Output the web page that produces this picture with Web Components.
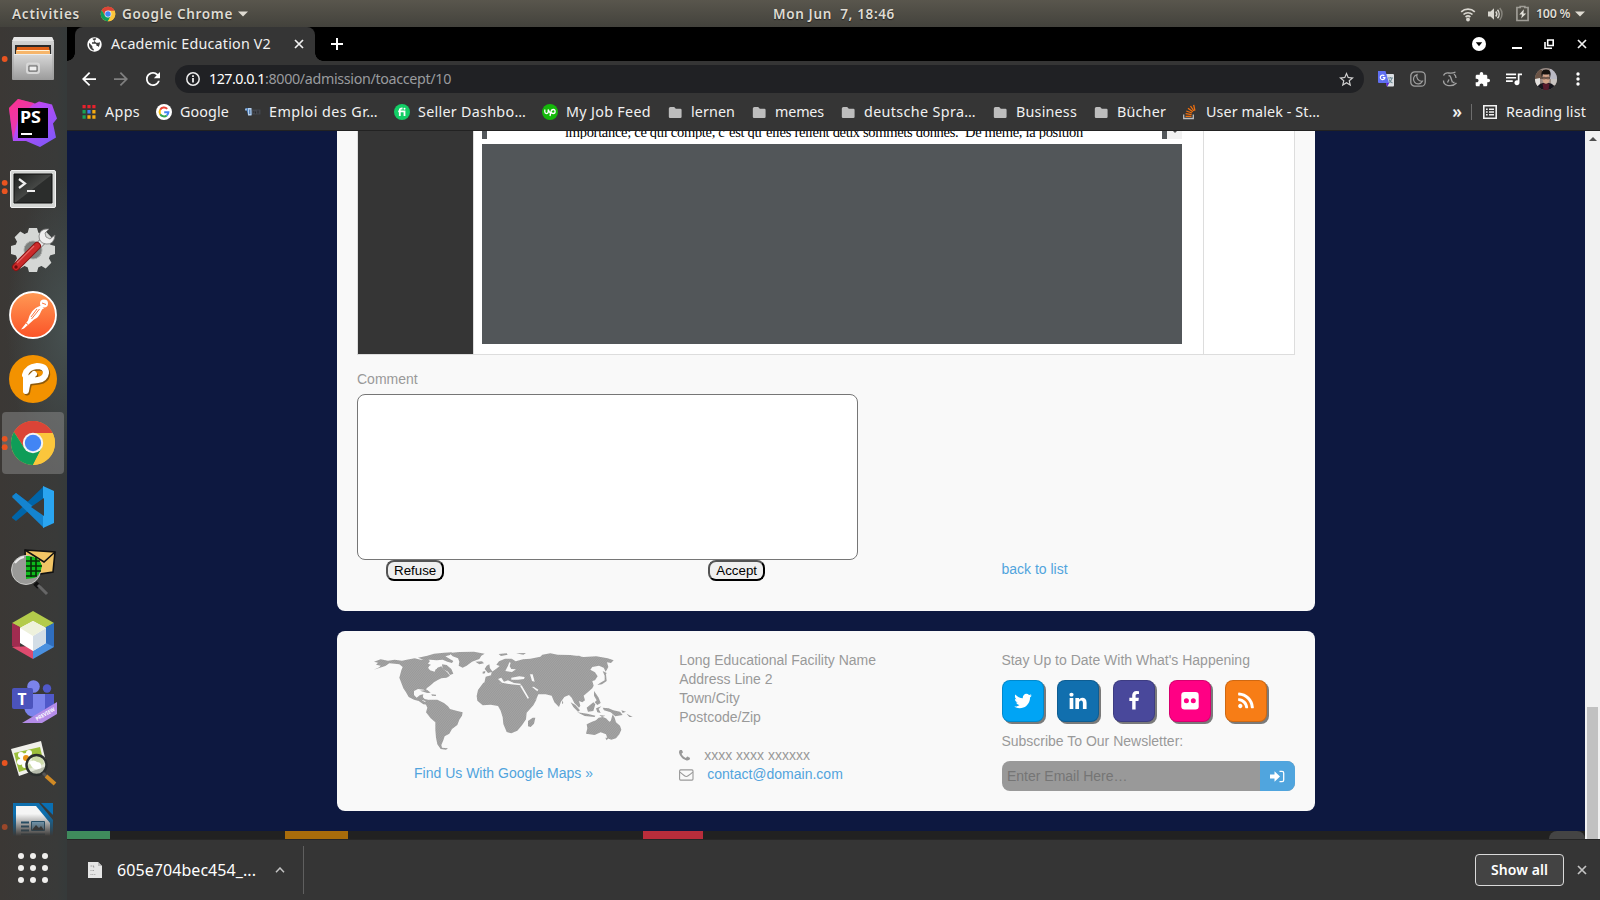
<!DOCTYPE html>
<html lang="en">
<head>
<meta charset="utf-8">
<title>Academic Education V2</title>
<style>
html,body{margin:0;height:100%;overflow:hidden;background:#0d1840}
body{font-family:"Noto Sans","Open Sans",sans-serif}
</style>
</head>
<body>
<desk-top></desk-top>
<script>
const def=(tag,css,html,init)=>customElements.define(tag,class extends HTMLElement{
  constructor(){super();this.attachShadow({mode:'open'})}
  connectedCallback(){
    if(this.ready)return;this.ready=true;
    this.shadowRoot.innerHTML=`<style>*{box-sizing:border-box}${css}</style>${typeof html==='function'?html(this):html}`;
    if(init)init(this);
  }
});

/* Text run whose letter spacing adapts to a given width */
def('fit-text',':host{display:inline-block;justify-self:start;white-space:pre;line-height:20px}','<slot></slot>',el=>{
  const w=parseFloat(el.getAttribute('w'));
  if(w){
    const n=el.textContent.length,cur=el.getBoundingClientRect().width;
    el.style.letterSpacing=((w-cur)/n).toFixed(3)+'px';
    el.style.width=w+'px';
  }
});

const chromeLogo=`<circle cx="24" cy="24" r="22" fill="#fbc63c"/><path d="M24 24L4.950 13A22 22 0 0 1 43.050 13z" fill="#db4437"/><path d="M24 14H43.600A22 22 0 0 0 4.950 13L15.300 29z" fill="#db4437"/><path d="M4.950 13A22 22 0 0 0 24 46L32.700 29 24 34 15.300 29z" fill="#0f9d58"/><path d="M43.600 14A22 22 0 0 1 24 46L32.700 29 24 14z" fill="#fbc63c"/><circle cx="24" cy="24" r="10.200" fill="#f4f4f4"/><circle cx="24" cy="24" r="8.200" fill="#4285f4"/>`;
const folder='<path d="M1 4q0-2 2-2h4.500l2 2.300H15q1.500 0 1.500 1.500V14q0 1.500-1.500 1.500H2.500Q1 15.500 1 14z" fill="#bdbdbd"/>';
const ICONS={
 chrome:['0 0 48 48',chromeLogo],
 down:['0 0 10 6','<path d="M0 .5h10L5 5.500z" fill="currentColor"/>'],
 wifi:['0 0 16 16','<g fill="none" stroke="#d9d7d0" stroke-width="1.700"><path d="M1.200 5.800a10 10 0 0 1 13.600 0M3.500 8.500a6.600 6.600 0 0 1 9 0M5.600 11a3.600 3.600 0 0 1 4.800 0"/></g><circle cx="8" cy="13.500" r="1.900" fill="#d9d7d0"/>'],
 vol:['0 0 16 16','<path d="M1 5.500h2.500L7 2.300v11.400L3.500 10.500H1z" fill="#d9d7d0"/><g fill="none" stroke="#d9d7d0" stroke-width="1.500"><path d="M8.800 5.500a4 4 0 0 1 0 5M10.500 3.700a6.500 6.500 0 0 1 0 8.600"/><path d="M12.700 2a9 9 0 0 1 0 12" opacity=".4"/></g>'],
 bat:['0 0 14 18','<path d="M4.500 2.500V1.500h5v1H13v14H1v-14z" fill="none" stroke="#a09e97" stroke-width="1.800"/><path d="M8.500 4.500L3.500 10h3l-1 4.500L11 9H8z" fill="#e1dfd8"/>'],
 globe:['1.500 1.500 21 21','<path fill="#fff" d="M12 2C6.480 2 2 6.480 2 12s4.480 10 10 10 10-4.480 10-10S17.520 2 12 2z"/><path fill="#353535" d="M4.500 9.500L9 14.500v1.500q0 2 2 2.300v2C6 19.500 3.500 15 4.500 9.500zM9 4q2-1 5-.6v1q0 2-2.500 2.200l-.5 2.400H8.500v2h5q1.500.3 1.500 3h1.500q1 .5 1.500 1.500 2-3.500 1.500-6.500-1-.5-2 .5l-3 .2L12 7.500z" opacity=".95"/>'],
 x:['0 0 10 10','<path d="M1 1l8 8M9 1L1 9" stroke="currentColor" stroke-width="1.700" fill="none"/>'],
 plus:['0 0 12 12','<path d="M6 0v12M0 6h12" stroke="#fff" stroke-width="2"/>'],
 tri:['0 0 14 14','<circle cx="7" cy="7" r="7" fill="#fff"/><path d="M3.800 5.200h6.400L7 9.200z" fill="#000"/>'],
 min:['0 0 10 10','<path d="M0 9h10" stroke="#fff" stroke-width="2"/>'],
 restore:['0 0 10 10','<path d="M3.700 1h5.500v5.500H3.700z M1 3v6.200h7" stroke="#fff" stroke-width="1.600" fill="none"/>'],
 back:['4 4 16 16','<path fill="currentColor" d="M20 11H7.830l5.590-5.590L12 4l-8 8 8 8 1.410-1.410L7.830 13H20v-2z"/>'],
 fwd:['4 4 16 16','<path fill="currentColor" d="M4 11h12.170l-5.590-5.590L12 4l8 8-8 8-1.410-1.410L16.170 13H4v-2z"/>'],
 reload:['4 4 16 16','<path fill="#fff" d="M17.650 6.350C16.200 4.900 14.210 4 12 4c-4.420 0-7.990 3.580-7.990 8s3.570 8 7.990 8c3.730 0 6.840-2.550 7.730-6h-2.080c-.82 2.330-3.040 4-5.650 4-3.310 0-6-2.690-6-6s2.690-6 6-6c1.660 0 3.140.69 4.220 1.780L13 11h7V4l-2.350 2.350z"/>'],
 info:['0 0 14 14','<circle cx="7" cy="7" r="6.200" fill="none" stroke="#ececec" stroke-width="1.500"/><path d="M7 3.200v1.700M7 6v4.600" stroke="#ececec" stroke-width="1.800"/>'],
 star:['2 2 20 20','<path fill="#d0d0d0" d="M22 9.240l-7.190-.62L12 2 9.190 8.630 2 9.240l5.460 4.730L5.820 21 12 17.270 18.180 21l-1.630-7.030L22 9.240zM12 15.400l-3.760 2.270 1-4.280-3.320-2.880 4.380-.38L12 6.100l1.710 4.040 4.380.38-3.320 2.880 1 4.280L12 15.400z"/>'],
 trans:['0 0 16 16','<path d="M6 3h9q1 0 1 1v10.500q0 1-1 1H9z" fill="#dcdfe3"/><path d="M10 7h5M12.500 6v1M14 7q-.7 3.500-3.500 5M11 8.500q1 2.500 3.500 3.500" stroke="#6d8a95" stroke-width="1.100" fill="none"/><path d="M0 0h7.500l3.500 12H1q-1 0-1-1z" fill="#5f6ff2"/><path d="M8 12h3.200L9 16z" fill="#5a22d8"/><path d="M6.300 4.800A2.300 2.300 0 1 0 6.900 6.600H4.800" fill="none" stroke="#fff" stroke-width="1.200"/>'],
 moon:['0 0 16 16','<rect x=".8" y=".8" width="14.400" height="14.400" rx="4" fill="none" stroke="#9e9e9e" stroke-width="1.300"/><path d="M7 3.600a4.700 4.700 0 1 0 5.400 6.600A5 5 0 0 1 7 3.600z" fill="none" stroke="#9e9e9e" stroke-width="1.200"/>'],
 aa:['0 0 16 16','<g fill="none" stroke="#a3a3a3" stroke-width="1.300"><path d="M1.500 4.500Q3 1.500 6.500 2q4 .6 7-1M12 3q2 1.500 2 4M1.500 9.500q0 4 4 4.800 6 1 9-2.300"/><path d="M5.500 11.500L7 8.500M6.500 5q1.500-.8 2 .8l2 5.700M11 11.500h1.500"/></g>'],
 puzzle:['1 1 22 22','<path fill="#fff" d="M20.500 11H19V7c0-1.100-.9-2-2-2h-4V3.500C13 2.120 11.880 1 10.500 1S8 2.120 8 3.500V5H4c-1.100 0-1.990.9-1.990 2v3.800H3.500c1.490 0 2.700 1.210 2.700 2.700s-1.210 2.700-2.700 2.700H2V20c0 1.100.9 2 2 2h3.800v-1.500c0-1.490 1.210-2.700 2.700-2.700s2.700 1.210 2.700 2.700V22H17c1.100 0 2-.9 2-2v-4h1.500c1.380 0 2.500-1.120 2.500-2.500S21.880 11 20.500 11z"/>'],
 music:['3 3 19 19','<path fill="#fff" d="M15 6H3v2h12V6zm0 4H3v2h12v-2zM3 16h8v-2H3v2zM17 6v8.180c-.31-.11-.65-.18-1-.18-1.660 0-3 1.340-3 3s1.340 3 3 3 3-1.340 3-3V8h3V6h-5z"/>'],
 avatar:['0 0 22 22','<clipPath id="c"><circle cx="11" cy="11" r="11"/></clipPath><g clip-path="url(#c)"><path d="M0 0h22v22H0z" fill="#9a8c86"/><path d="M0 2h7v9H0z" fill="#6b5446"/><path d="M15 1h7v10h-7z" fill="#b9b9c4"/><path d="M0 11l5-1v8H0z" fill="#e4e1de"/><path d="M16 11h6v6h-6z" fill="#c8c3c0"/><path d="M2 22q0-6 6-7h6q6 1 6 7z" fill="#15151c"/><path d="M7.500 15.500h7l-1 6.500h-5z" fill="#571a2c"/><ellipse cx="11" cy="10.500" rx="3.600" ry="5.300" fill="#d5a58a"/><path d="M7 10Q4.500 1.500 11 1.500T15 10l-.7-4q-3.500 1-6.500 0z" fill="#17120f"/><path d="M7.600 9.300h2.800v1.500H7.600zM11.600 9.300h2.800v1.500h-2.800z" fill="none" stroke="#26201e" stroke-width=".7"/></g>'],
 more:['0 0 4 14','<g fill="#fff"><circle cx="2" cy="2" r="1.700"/><circle cx="2" cy="7" r="1.700"/><circle cx="2" cy="12" r="1.700"/></g>'],
 apps:['0 0 14 14','<path d="M.5 0h3.200v3.200H.5zM5.400 0h3.200v3.200H5.400zM10.300 0h3.200v3.200h-3.200z" fill="#e8212c"/><path d="M.5 5h3.200v3.500H.5zM.5 10.300h3.200v3.400H.5z" fill="#17a357"/><path d="M5.400 5h3.200v3.500H5.400z" fill="#3e7cf0"/><path d="M5.400 10.300h3.200v3.400H5.400zM10.300 5h3.200v3.500h-3.200zM10.300 10.300h3.200v3.400h-3.200z" fill="#f6ab12"/>'],
 google:['0 0 16 16','<circle cx="8" cy="8" r="8" fill="#fff"/><g fill="none" stroke-width="2"><path d="M11.200 4.900A4.400 4.400 0 0 0 4.200 5.800" stroke="#ea4335"/><path d="M4.200 5.800a4.400 4.400 0 0 0 0 4.400" stroke="#fbbc05"/><path d="M4.200 10.200a4.400 4.400 0 0 0 6.600 1.200" stroke="#34a853"/><path d="M10.800 11.400A4.200 4.200 0 0 0 12.400 8.200H8.200" stroke="#4285f4"/></g>'],
 isat:['0 0 16 16','<path d="M1 4h5l.7 7H3z" fill="#4f83c2"/><path d="M3 4h3.500v7.500H3z" fill="#b5cfea"/><path d="M4.300 5.500h1v4.500h-1z" fill="#2f5f9e"/><path d="M0 4.500h2v2H0z" fill="#8fb4dc"/><path d="M7 5.500h8.500v5H7z" fill="#43464d"/><path d="M8 8h1.500M10.500 7.500v2M13 6.500v3" stroke="#262629"/>'],
 fi:['0 0 16 16','<circle cx="8" cy="8" r="8" fill="#13ce66"/><path d="M5.800 12V5.800q0-1.500 2.700-1.300M4.200 7.400h6.300V12" fill="none" stroke="#fff" stroke-width="1.800"/><circle cx="10.500" cy="4.700" r="1" fill="#fff"/>'],
 up:['0 0 16 16','<circle cx="8" cy="8" r="8" fill="#14b80a"/><path d="M2.800 5.500v2.300q0 1.800 1.700 1.800t1.700-1.800V5.500Q7.500 8.500 8.500 9.500M8 12l1-4.500q.5-2 2.300-2t1.800 2-1.800 2T9 8" fill="none" stroke="#fff" stroke-width="1.300"/>'],
 folder:['0 1 17 15.500',folder],
 stack:['0 0 16 16','<path d="M1.700 10.500v4h9.600v-4" fill="none" stroke="#bdbdbd" stroke-width="1.300"/><g stroke="#f2700d" stroke-width="1.300"><path d="M3.500 12.300h6M3.600 9.700l6 .9M4.300 7l5.700 2M6 4.200l4.800 3.600M8.500 2l3.400 5M11.700.8l1.200 5.900"/></g>'],
 list:['0 0 14 14','<path d="M.8.800h12.400v12.400H.8z" fill="none" stroke="#f1f1f1" stroke-width="1.600"/><path d="M3 4.300h1.700M3 7h1.700M3 9.700h1.700M6 4.300h5M6 7h5M6 9.700h5" stroke="#f1f1f1" stroke-width="1.500"/>'],
 file:['0 0 14 16','<path d="M0 0h10l4 4v12H0z" fill="#e6e6e6"/><path d="M10 0l4 4h-4z" fill="#bcbcbc"/><g stroke="#a2a2a2" stroke-width="1.200"><path d="M2.500 4h1.500M2.500 8.500h1M4.500 8.500h1.500M2.500 12.500h1M4.300 12.500h1M6.300 12.500h1M5 3.500l1 2" /></g>'],
 caret:['0 0 10 6','<path d="M1 5.200L5 1l4 4.200" fill="none" stroke="#c4c4c4" stroke-width="1.500"/>'],
 twitter:['0 0 1792 1792','<path fill="#fff" d="M1684 408q-67 98-162 167 1 14 1 42 0 130-38 259.500t-115.500 248.500-184.500 210.500-258 146-323 54.500q-271 0-496-145 35 4 78 4 225 0 401-138-105-2-188-64.500t-114-159.500q33 5 61 5 43 0 85-11-112-23-185.500-111.500t-73.500-205.500v-4q68 38 146 41-66-44-105-115t-39-154q0-88 44-163 121 149 294.500 238.500t371.500 99.500q-8-38-8-74 0-134 94.500-228.500t228.500-94.500q140 0 236 102 109-21 205-78-37 115-142 178 93-10 186-50z"/>'],
 linkedin:['0 0 1792 1792','<path fill="#fff" d="M477 625v991h-330v-991h330zm21-306q1 73-50.500 122t-135.500 49h-2q-82 0-132-49t-50-122q0-74 51.500-122.500t134.500-48.500 133 48.500 51 122.500zm1166 729v568h-329v-530q0-105-40.500-164.500t-126.500-59.500q-63 0-105.500 34.500t-63.500 85.500q-11 30-11 81v553h-329q2-399 2-647t-1-296l-1-48h329v144h-2q20-32 41-56t56.500-52 87-43.500 114.500-15.500q171 0 275 113.500t104 332.500z"/>'],
 facebook:['0 0 1792 1792','<path fill="#fff" d="M1343 12v264h-157q-86 0-116 36t-30 108v189h293l-39 296h-254v759h-306v-759h-255v-296h255v-218q0-186 104-288.500t277-102.500q147 0 228 12z"/>'],
 flickr:['0 0 20 20','<rect x="1.300" y="1" width="17.400" height="17.400" rx="3.200" fill="#fff"/><circle cx="6.400" cy="9.700" r="2.500" fill="#ff0084"/><circle cx="13.300" cy="9.700" r="2.500" fill="#ff0084"/>'],
 rss:['0 0 1792 1792','<path fill="#fff" d="M576 1344q0 80-56 136t-136 56-136-56-56-136 56-136 136-56 136 56 56 136zm512 123q2 28-17 48-18 21-47 21h-135q-25 0-43-16.500t-20-41.500q-22-229-184.500-391.500t-391.500-184.500q-25-2-41.500-20t-16.500-43v-135q0-29 21-47 17-17 43-17h5q160 13 306 80.500t259 181.500q114 113 181.500 259t80.500 306zm512 2q2 27-18 47-18 20-46 20h-143q-26 0-44.500-17.500t-19.500-42.500q-12-215-101-408.500t-231.500-336-336-231.500-408.500-102q-25-1-42.500-19.500t-17.500-43.500v-143q0-28 20-46 18-18 44-18h3q262 13 501.500 120t425.500 294q187 186 294 425.500t120 501.500z"/>'],
 phone:['192 256 1408 1280','<path fill="#999" d="M1600 1240q0 27-10 70.500t-21 68.500q-21 50-122 106-94 51-186 51-27 0-53-3.500t-57.500-12.500-47-14.500-55.500-20.500-49-18q-98-35-175-83-127-79-264-216t-216-264q-48-77-83-175-3-9-18-49t-20.500-55.500-14.500-47-12.500-57.500-3.500-53q0-92 51-186 56-101 106-122 25-11 68.500-21t70.500-10q14 0 21 3 18 6 53 76 11 19 30 54t35 63.500 31 53.500q3 4 17.500 25t21.500 35.500 7 28.500q0 20-28.500 50t-62 55-62 53-28.500 46q0 9 5 22.500t8.500 20.500 14 24 11.500 19q76 137 174 235t235 174q2 1 19 11.500t24 14 20.500 8.500 22.500 5q18 0 46-28.500t53-62 55-62 50-28.500q14 0 28.500 7t35.500 21.500 25 17.500q25 15 53.500 31t63.500 35 54 30q70 35 76 53 3 7 3 21z"/>'],
 mail:['0 0 15 12','<rect x=".6" y=".9" width="13.400" height="10.200" rx="1" fill="none" stroke="#999" stroke-width="1.100"/><path d="M1 3.200Q3 5 5.500 6.800q1.800 1.400 3.600 0Q12 5 13.800 3.200" fill="none" stroke="#999" stroke-width="1.100"/>'],
 signin:['0 0 15 13','<path d="M0 4.500h4.500V1.300L10 6.500 4.500 11.700V8.500H0z" fill="#fff"/><path d="M9.500 1.400h2.600q1.600 0 1.600 1.600v7q0 1.600-1.600 1.600H9.500" fill="none" stroke="#fff" stroke-width="1.300"/>']
};
def('ui-icon',':host{display:inline-flex;flex:none}svg{display:block}',el=>{
  const [vb,body]=ICONS[el.getAttribute('name')];
  const s=el.getAttribute('size').split('x');
  return `<svg width="${s[0]}" height="${s[1]||s[0]}" viewBox="${vb}">${body}</svg>`;
});

/* ---------- GNOME top bar ---------- */
def('top-bar',`:host{display:grid;grid-template-columns:773px 122px 1fr;align-items:center;height:27px;background:linear-gradient(#59564d,#43423c);color:#dfdbd2;font-weight:600;font-size:13.500px;text-shadow:0 1px 1px #222}
 .l,.r{display:flex;align-items:center}.l{padding-left:12px}.r{justify-content:flex-end;padding-right:15px}`,
`<div class="l"><fit-text w="68">Activities</fit-text><ui-icon name="chrome" size="16" style="margin:0 6px 0 20px"></ui-icon><fit-text w="111">Google Chrome</fit-text><ui-icon name="down" size="10x6" style="margin-left:5px"></ui-icon></div>
<fit-text w="122">Mon Jun  7, 18:46</fit-text>
<div class="r"><ui-icon name="wifi" size="16"></ui-icon><ui-icon name="vol" size="16" style="margin:0 13px 0 11px"></ui-icon><ui-icon name="bat" size="13x17"></ui-icon><fit-text w="34" style="margin:0 5px 0 7px;font-size:12.500px">100 %</fit-text><ui-icon name="down" size="10x6" ></ui-icon></div>`);

/* ---------- Dock ---------- */
const DOCK={
files:`<defs><linearGradient id="g" x2="0" y2="1"><stop stop-color="#d8d8d8"/><stop offset="1" stop-color="#9b9b9b"/></linearGradient></defs><path d="M14 10h38l2 5v37q0 1-1 1H13q-1 0-1-1V15z" fill="url(#g)"/><path d="M14 10h38l2 4H12z" fill="#e6e6e6"/><path d="M15 18h36v9H15z" fill="#2b2b2b"/><path d="M17 20h32l1 7H16z" fill="#de5f17"/><path d="M16 23h34v4H16z" fill="#f6b56a"/><path d="M17 23.500h32" stroke="#fff3da"/><path d="M14 27h38v26H14z" fill="url(#g)"/><path d="M14 27.500h38" stroke="#ececec"/><rect x="27" y="36.500" width="12" height="9.500" rx="2" fill="none" stroke="#d8d8d8" stroke-width="2"/><path d="M29 39h8v5h-8z" fill="#eee" stroke="#666"/>`,
ps:`<defs><linearGradient id="g" x2="1" y2="1"><stop stop-color="#ff318c"/><stop offset=".4" stop-color="#b74af7"/><stop offset="1" stop-color="#765af8"/></linearGradient></defs><path d="M18 8l17 4.500 4-2 13 3 5 14-4 5 3 14-16 9.500-14-6H13L9 17z" fill="url(#g)"/><path d="M18 8l16 4-16 16-5 20L9 17z" fill="#ff318c" opacity=".65"/><path d="M18 17h30v30H18z" fill="#000"/><text x="20" y="31.500" font-family="Noto Sans,sans-serif" font-weight="700" font-size="15.500" fill="#fff" textLength="21" lengthAdjust="spacingAndGlyphs">PS</text><path d="M21 42h11v2H21z" fill="#fff"/>`,
term:`<defs><linearGradient id="g" x2="1" y2="1"><stop stop-color="#1d1f1e"/><stop offset=".5" stop-color="#454745"/><stop offset=".52" stop-color="#2b2d2c"/><stop offset="1" stop-color="#2b2d2c"/></linearGradient></defs><rect x="10.500" y="15.500" width="45" height="37" rx="1.500" fill="#d4d6d4" stroke="#f2f2f2"/><path d="M14 19h38v29H14z" fill="url(#g)" stroke="#111"/><path d="M19 24l6 4.500-6 4.500" fill="none" stroke="#eee" stroke-width="2.200"/><path d="M27 36h8" stroke="#eee" stroke-width="2"/>`,
tools:`<g transform="translate(33 31)"><g fill="#d5d7d5"><path d="M-4-22h8l2 7h-12zM-4 22h8l2-7h-12z"/><path d="M-22-4v8l7 2v-12zM22-4v8l-7 2v-12z"/><g transform="rotate(45)"><path d="M-4-22h8l2 7h-12zM-4 22h8l2-7h-12z"/><path d="M-22-4v8l7 2v-12zM22-4v8l-7 2v-12z"/></g></g><circle r="13.500" fill="none" stroke="#d5d7d5" stroke-width="9"/><circle r="9" fill="#7c7e7c" stroke="#aeb0ae" stroke-width="1"/></g><path d="M35 30l9-9" stroke="#777" stroke-width="7"/><path d="M35 30l9-9" stroke="#e6e6e6" stroke-width="5.500"/><path d="M49 10q-9-1-10 7 0 7 7 8 8 1 9-9l-5 4-4-2-1-4z" fill="#eee" stroke="#777" stroke-width=".8"/><path d="M16 48L37 27" stroke="#8b1414" stroke-width="8" stroke-linecap="round"/><path d="M16 48L37 27" stroke="#cc2a2a" stroke-width="6" stroke-linecap="round"/><path d="M17 44L34 27" stroke="#e46a6a" stroke-width="1.200"/><circle cx="16" cy="48" r="1.700" fill="#6b0d0d"/>`,
postman:`<defs><linearGradient id="g" x2="0" y2="1"><stop stop-color="#ff9a55"/><stop offset="1" stop-color="#fb5327"/></linearGradient></defs><circle cx="33" cy="32" r="23" fill="url(#g)" stroke="#fff" stroke-width="1.800"/><circle cx="44" cy="20.500" r="4" fill="#fff"/><path d="M41 22.500q-6 2-9 6-3 4-4 9l-7 9 3-1 10-9q5-2 7-8 1-3 3-3z" fill="#fff"/><path d="M39.500 26l-8 10M37 26l-6 8M42 20l4 1.500M26 40l2 1.500" stroke="#fb7640" stroke-width="1"/>`,
pp:`<circle cx="33" cy="32" r="24" fill="#f39200"/><g fill="none" stroke-width="6" stroke-linecap="round" stroke-linejoin="round"><path d="M26 44q1-8 4-13l4-4M25 28q2-8 12-9 9 0 9 7-1 6-8 7l-8 1" stroke="#8f5a0a" transform="translate(1.200 1.500)"/><path d="M26 44q1-8 4-13l4-4M25 28q2-8 12-9 9 0 9 7-1 6-8 7l-8 1" stroke="#fff"/><path d="M26 42V30" stroke="#fff"/></g>`,
chrome:`<rect x="2" y="1" width="62" height="62" rx="4" fill="#8b8b8b" opacity=".5"/><g transform="translate(9 8)">${chromeLogo}</g>`,
code:`<path d="M12 21l4-3 28 21v8z" fill="#0a7ac8"/><path d="M12 42L44 11v12L16 46l-4-3z" fill="#0065a9"/><path d="M12 22l4-4 28 22v13z" fill="#1484d0"/><path d="M43 11l11 5v32l-11 5z" fill="#2aa5f1"/><path d="M44 23v18L31 32z" fill="#3b3b39"/>`,
spy:`<path d="M25 11l30 2-2 20-27 4z" fill="#f2c565" stroke="#111" stroke-width="1.600"/><path d="M25 11l19 12L55 13" fill="none" stroke="#111" stroke-width="1.600"/><circle cx="26" cy="31" r="14.500" fill="#9a9a98" stroke="#c9c9c7" stroke-width="1"/><path d="M26 17q13-1 16 10-2 10-8 12l-8 1z" fill="#0dbb1b"/><path d="M26 22h14M26 27h16M26 32h15M26 37h11M31 18v20M36 18v19" stroke="#072d09" stroke-width="1.600"/><path d="M15 24q4-5 9-6" stroke="#eee" stroke-width="2" fill="none"/><path d="M35 44l4 4" stroke="#111" stroke-width="5"/><path d="M38 46l9 9" stroke="#666" stroke-width="3"/>`,
nb:`<path d="M33 8l21 12-21 12-21-12z" fill="#b3cb4b"/><path d="M12 20v23l8 4V24z" fill="#a02c50"/><path d="M12 44l21 12V43z" fill="#dd4a6e"/><path d="M54 20v24L33 56V43z" fill="#4a90df"/><path d="M54 20v24l-10-5V25z" fill="#2f6ebf"/><path d="M33 18l13 7v15l-13 8-13-8V25z" fill="#fff"/><path d="M33 33l13-8v15l-13 8z" fill="#d3dde6"/><path d="M33 18l13 7-13 8-13-8z" fill="#eef1dc"/>`,
teams:`<circle cx="33.500" cy="19.500" r="6.300" fill="#7b83eb"/><circle cx="47" cy="21.500" r="4.200" fill="#5059c9"/><path d="M41 27h13v12q0 6-6 8l-7-3z" fill="#5059c9"/><path d="M24 27h21v14q-1 9-10 9t-11-9z" fill="#7b83eb"/><rect x="12" y="21" width="21" height="21" rx="2" fill="#4b53bc"/><text x="17.500" y="37.500" font-family="Noto Sans,sans-serif" font-weight="700" font-size="15.500" fill="#fff">T</text><path d="M22 56L57 35v12L42 56z" fill="#b48ce8"/><text transform="translate(37 54) rotate(-30)" font-family="Noto Sans,sans-serif" font-weight="700" font-size="5.300" fill="#fff" textLength="21" lengthAdjust="spacingAndGlyphs">PREVIEW</text>`,
viewer:`<path d="M11 18l30-8 6 25-28 10z" fill="#f0f0ea"/><path d="M14 22l26-6 4 17-25 8z" fill="#9cbf3b"/><g fill="#fff"><circle cx="26" cy="28" r="6"/><circle cx="21" cy="24" r="3"/><circle cx="29" cy="22" r="3"/><circle cx="20" cy="31" r="3"/><circle cx="25" cy="34" r="3"/></g><circle cx="26" cy="27" r="3" fill="#e99316"/><circle cx="36.500" cy="34" r="10" fill="#dfe5d2" opacity=".75"/><path d="M29 31q5-3 8 0 5 0 4 6-6 3-9-1z" fill="#fff"/><circle cx="36.500" cy="34" r="10" fill="none" stroke="#2b2f2e" stroke-width="2.500"/><path d="M43 42l4 4" stroke="#555" stroke-width="3"/><path d="M46 45l9 8" stroke="#d08a25" stroke-width="4"/>`,
impress:`<defs><linearGradient id="g" x2="0" y2="1"><stop offset=".35" stop-color="#3a3937" stop-opacity="0"/><stop offset="1" stop-color="#3a3937"/></linearGradient></defs><path d="M13 8h26l14 17v28H13z" fill="#0e6fae"/><path d="M41 8h12v12z" fill="#0a6fb3"/><path d="M16 11h20l14 17v25H16z" fill="#f5f5f5"/><path d="M21 27.500h8M21 31.500h8M21 35.500h8M21 39.500h24" stroke="#1c5a80" stroke-width="1.800"/><path d="M31.500 26.500h13v9h-13z" fill="#8fc4e6" stroke="#1c5a80"/><path d="M32 35l4-5 3 3 2-2 3 4z" fill="#333"/><rect x="12" y="7" width="43" height="34" fill="url(#g)"/>`
};
def('dock-item',':host{display:block;height:64px;width:67px;flex:none}svg{display:block}',el=>{
  const n=+el.getAttribute('dots')||0,faded=el.hasAttribute('faded');
  const d=n===1?'<circle cx="4.700" cy="32" r="2.900"/>':n===2?'<circle cx="4.700" cy="27.800" r="2.900"/><circle cx="4.700" cy="36.200" r="2.900"/>':'';
  return `<svg width="67" height="64" viewBox="0 0 67 64">${DOCK[el.getAttribute('app')]}<g fill="#e95420" opacity="${faded?.55:1}">${d}</g></svg>`;
});
def('side-dock',`:host{display:flex;flex-direction:column;width:67px;background:radial-gradient(ellipse 60px 150px at 67px 300px,#465050 0,transparent 100%),linear-gradient(90deg,#3b3835,#393a39 85%,#353a3a);overflow:hidden}
 .apps{height:809px;overflow:hidden}.grid{display:grid;grid-template-columns:repeat(3,6px);gap:6px;margin:17px 0 0 18px}.grid i{width:6px;height:6px;border-radius:3px;background:#f0efed}`,
`<div class="apps"><dock-item app="files" dots="1"></dock-item><dock-item app="ps"></dock-item><dock-item app="term" dots="2"></dock-item><dock-item app="tools"></dock-item><dock-item app="postman"></dock-item><dock-item app="pp"></dock-item><dock-item app="chrome" dots="2"></dock-item><dock-item app="code"></dock-item><dock-item app="spy"></dock-item><dock-item app="nb"></dock-item><dock-item app="teams"></dock-item><dock-item app="viewer" dots="1"></dock-item><dock-item app="impress" dots="1" faded></dock-item></div>
<div class="grid">${'<i></i>'.repeat(9)}</div>`);

/* ---------- Browser chrome ---------- */
def('tab-strip',`:host{display:flex;height:34px;background:#000;color:#f1f1f1;font-size:14.300px;padding-left:8px;align-items:stretch}
 .tab{position:relative;width:240px;background:#353535;border-radius:8px 8px 0 0;display:flex;align-items:center;padding:0 11px 0 12px}
 .tab:before,.tab:after{content:"";position:absolute;bottom:0;width:8px;height:8px}
 .tab:before{left:-8px;background:radial-gradient(circle at 0 0,transparent 7.500px,#353535 8px)}
 .tab:after{right:-8px;background:radial-gradient(circle at 100% 0,transparent 7.500px,#353535 8px)}
 fit-text{margin-left:9px}.x{margin-left:auto}
 .win{margin-left:auto;display:flex;align-items:center;padding-right:13px}`,
`<div class="tab"><ui-icon name="globe" size="15"></ui-icon><fit-text w="160">Academic Education V2</fit-text><ui-icon class="x" name="x" size="10"></ui-icon></div>
<ui-icon name="plus" size="12" style="margin-left:16px;align-self:center"></ui-icon>
<div class="win"><ui-icon name="tri" size="14" style="margin-right:26px"></ui-icon><ui-icon name="min" size="10" style="margin-right:22px"></ui-icon><ui-icon name="restore" size="10" style="margin-right:23px"></ui-icon><ui-icon name="x" size="10"></ui-icon></div>`);

def('tool-bar',`:host{display:flex;height:36px;background:#353535;align-items:center;padding:0 6px;color:#fff}
 .b{width:32px;display:flex;justify-content:center;flex:none}
 .omni{flex:1;height:28px;border-radius:14px;background:#202124;display:flex;align-items:center;margin:0 6px;padding:0 10px 0 11px;font-size:14.300px}
 .dim{color:#999b9e}`,
`<span class="b"><ui-icon name="back" size="14"></ui-icon></span><span class="b" style="color:#7f7f7f"><ui-icon name="fwd" size="14"></ui-icon></span><span class="b"><ui-icon name="reload" size="14"></ui-icon></span>
<div class="omni"><ui-icon name="info" size="14" style="margin-right:9px"></ui-icon><fit-text w="56">127.0.0.1</fit-text><fit-text class="dim" w="186">:8000/admission/toaccept/10</fit-text><ui-icon name="star" size="15" style="margin-left:auto"></ui-icon></div>
<span class="b"><ui-icon name="trans" size="16"></ui-icon></span><span class="b"><ui-icon name="moon" size="16"></ui-icon></span><span class="b"><ui-icon name="aa" size="16"></ui-icon></span><span class="b"><ui-icon name="puzzle" size="15"></ui-icon></span><span class="b"><ui-icon name="music" size="16"></ui-icon></span><span class="b"><ui-icon name="avatar" size="22"></ui-icon></span><span class="b"><ui-icon name="more" size="4x14"></ui-icon></span>`);

def('book-mark',':host{display:flex;align-items:center;flex:none}.i{width:24px;display:flex;justify-content:center;margin-right:4px}',
 el=>`<span class="i"><ui-icon name="${el.getAttribute('icon')}" size="${el.getAttribute('s')||16}"></ui-icon></span><fit-text w="${el.getAttribute('w')}">${el.getAttribute('label')}</fit-text>`);
const BM=[['apps','Apps',35,77,14],['google','Google',49,152],['isat','Emploi des Gr…',109,241],['fi','Seller Dashbo…',108,390],['up','My Job Feed',85,538],['folder','lernen',44,663,'14x13'],['folder','memes',49,747,'14x13'],['folder','deutsche Spra…',112,836,'14x13'],['folder','Business',61,988,'14x13'],['folder','Bücher',49,1089,'14x13'],['stack','User malek - St…',114,1178]];
def('bookmarks-bar',`:host{display:flex;height:34px;background:#353535;border-bottom:1px solid #222;color:#f1f1f1;font-size:14.300px;align-items:center;padding:0 14px 3px 10px}
 .more{margin-left:auto;font-size:17px;font-weight:600;margin-right:9px;line-height:20px}.sep{width:1px;height:16px;background:#6d6d6d;margin-right:11px}`,
 BM.map((b,i)=>`<book-mark icon="${b[0]}" label="${b[1]}" w="${b[2]}" s="${b[4]||16}" style="width:${(BM[i+1]?BM[i+1][3]:1330)-b[3]}px"></book-mark>`).join('')+
 '<span class="more">»</span><span class="sep"></span><ui-icon name="list" size="14" style="margin-right:9px"></ui-icon><fit-text w="80">Reading list</fit-text>');

/* ---------- Page ---------- */
def('world-map',':host{display:block}svg{display:block;margin:0 auto}',
`<svg width="261" height="99" viewBox="101 92 783 297"><defs><pattern id="h" width="5" height="5" patternUnits="userSpaceOnUse" patternTransform="rotate(40)"><path d="M0 0h5v5H0z" fill="#999"/><path d="M0 0h1.500v5H0z" fill="#acacac"/></pattern></defs><g fill="url(#h)">
<path d="M103 148l17-7 4-5-14-3 6-6-12-3 20-7 22 4 20-3 22 3 14-3 24-4 18 4 20-2 8 6-6 8 10 4-10 8 6 8 14 4 4-10 16-6 6 8 12 10 8 10-10 6-16 2-12 6-10 6-12 10-10 8-2 10-6-6-18-2-12 6 0 12 8 8 10-8 10-2-2 10-2 8 10 6 10 2-2 5-14-1-14-10-14-4-16-8-8-14-8-12-6-16-6-16 6-22 4-10-10-8-14-2-16-1-12 8z"/>
<path d="M236 112l28-6 20-6 30-3 24-1-6 8-14 4 10 6 14 8-4 6-14-4-14-6-18 2-20-2-16 2z"/><path d="M308 132l14 2 14 12 6 14-10 4-6-10-16-8z"/>
<path d="M330 98l30-3 44-1 32 6-10 6-6 10-22 8-16 12-12 6-12-6 2-12-4-10-16-6z"/>
<path d="M408 124l20-1 6 6-14 3zM478 101l24-2 3 4-20 4zM530 99l30-1-8 5zM696 107l24-1 6 5-24 1z"/>
<path d="M242 211l22-2 10 8-10 1zM276 222l14 1v4l-12-1z"/>
<path d="M236 232l14 8 16 4 4-5-14-3-8-8z"/>
<path d="M256 244l14-6 24 0 20 10 12 10 6 8 22 6 16 4-2 10-8 12-6 16-16 12-8 14-14 8-4 12-6 14 2 8 18 2-6 4-16-2-10-14-4-20-2-24 0-22-14-12-14-18 4-14z"/>
<path d="M435 187l4-18 16-4 2-10 14-10 10-8-10-4 8-10 18-8 20 0 12 8 22-6 22-2 30-6 6-6 24-4 22 4 38 1 40 6 38-2 34 6 18 6-8 8-12-2 4 14-8 14-6-12-14-6-20 4-6 8 14 8 8 12-8 12-8 2 4 14-4 8-12 10-14 12 4 14-8 6-10-4 4 14-4 6-14-14-8-16-8-8-14 6-10 14-6 16-14-14-8-20-18-4-22 0-6 14-20 12-10-2-14-22-4-12-8-6-20-2-10-8-10 2-8-6-10-4-12 4-10 8z"/>
<path d="M432 187l22-4 22-3 6 10 20 4 16 0 26 2 12 20 14 22 22-1-10 18-20 22-2 20-12 18-14 16-18 8-14-4-10-24-2-20-6-20-8-14-22-4-24 2-16-14-2-14 4-18z"/>
<path d="M566 302l14-10 8 0-4 18-10 10-8-2zM436 146l6-10 8-4 2 12 8 10-14 4zM430 154l8-2-1 7-7 1z"/>
<path d="M540 168l16 2-2 6-18 2-20 0 0-6z" fill="#f9f9f9"/><path d="M572 162l8 0 6 22-8-2z" fill="#f9f9f9"/><path d="M476 176l10-4 8 12 12-4 18 8 20 2 0 5-30-3-26-5z" fill="#f9f9f9"/><path d="M542 196l5-1 22 38-4 2zM578 200l5-1 14 9-3 5z" fill="#f9f9f9"/><path d="M268 138l18-10 10 10-4 8-14 2z" fill="#f9f9f9"/><path d="M498 152l8-16 4-10 4 1-3 11 5 8 14 1-12 8z" fill="#f9f9f9"/>
<path d="M668 240l4 8-4 3zM694 246l14 8 14 16-6 4-14-14zM714 276l30 4 24 6-2 4-30-3zM742 262l20-16 6 6-6 20-16 2zM770 264l16-6-8 8 6 12-10-2zM764 212l6 8 8 12 6 16-10 6-8-8 6-6-8-14zM790 262l18 2 14 6 20 4 8 10-22 4-14-12-20-6zM780 284l18 2-10 4zM846 270l14 4-10 4zM862 280l18 10-10 0z"/>
<path d="M774 194l14-2 14-10-2-20 2-4-12-6 6 14 0 14-14 8z"/>
<path d="M740 340l4-16-2-12 16-8 12-4 8-8 12-2 10 4 10 10 4-2 6-20 6 10 4 14 12 10 4 12-6 14-10 12-14 4-12-4-4-12-16-6-18 8z"/><path d="M798 352l10 0-6 8z"/>
</g></svg>`);

def('content-card',':host{display:block;background:#f9f9f9;border-radius:8px;padding:20px}','<slot></slot>');

def('document-table',`:host{display:grid;grid-template-columns:116px 1fr 90px;height:224px;background:#fff;border:1px solid #ddd;border-top:0}
 .a{background:#353535;border-right:1px solid #ddd}.m{padding:0 21px 0 8px;border-right:1px solid #ddd}
 .frame{height:8px;display:flex;overflow:hidden}.gut{width:5px;background:#525659}.sheet{flex:1;padding-left:78px;overflow:hidden;background:#fff}
 fit-text{font:14.500px/18px "Liberation Serif",serif;color:#000;margin-top:-8px;vertical-align:top}
 .sb{width:15px;background:#f1f1f1;display:flex;justify-content:center}.sb:before{content:"";border:4px solid transparent;border-top-color:#505050;height:0;margin-top:-2px}
 .view{height:200px;margin-top:5px;background:#525659}`,
`<div class="a"></div><div class="m"><div class="frame"><div class="gut"></div><div class="sheet"><fit-text w="518">importance; ce qui compte, c’est qu’elles relient deux sommets donnés.  De même, la position</fit-text></div><div class="gut"></div><div class="sb"></div></div><div class="view"></div></div><div></div>`);

def('review-form',`:host{display:block;font:14px/19px "Liberation Sans",Arial,sans-serif;color:#999}
 label{display:block;margin:15px 0 5px}textarea{display:block;width:501px;height:166px;border:1px solid #767676;border-radius:8px;resize:none;margin:0;background:#fff}
 .row{display:grid;grid-template-columns:322.300px 322.200px 1fr}
 button{font:13.333px "Liberation Sans",Arial,sans-serif;margin:0 0 0 29px;border-radius:8px;height:21px;padding:1px 6px;border:2px outset #000;background:#efefef;color:#000}
 a{color:#51a4dd}`,
`<label>Comment</label><textarea></textarea><div class="row"><div><button>Refuse</button></div><div><button>Accept</button></div><a>back to list</a></div>`);

def('social-button',':host{display:flex;width:42px;height:42px;border-radius:8px;align-items:center;justify-content:center;border:1px solid rgba(0,0,0,.16);box-shadow:2px 2px 0 #7a7a7a;flex:none}',
 el=>`<ui-icon name="${el.getAttribute('icon')}" size="20"></ui-icon>`);

def('page-footer',`:host{display:grid;grid-template-columns:293px 293px 293px;column-gap:29.200px;font:14px/19px "Liberation Sans",Arial,sans-serif;color:#999}
 a{color:#51a4dd}.c{text-align:center}.c a{display:block;margin-top:14px}
 .ln{display:flex;align-items:center;height:19px}.soc{display:grid;grid-template-columns:55px 56px 56px 56px 42px;margin:10px 0 10px .6px}
 .nl{display:flex;width:293px;height:30px;border-radius:8px;overflow:hidden;margin:10px 0 0 .6px;background:#999}
 .nl input{flex:1;min-width:0;border:0;background:none;padding:0 5px;font:inherit;margin:0}.nl input::placeholder{color:#757575;opacity:1}
 .nl span{width:35px;background:#50a5de;display:flex;align-items:center;justify-content:center}`,
`<div class="c"><world-map></world-map><a>Find Us With Google Maps »</a></div>
<div>Long Educational Facility Name<br>Address Line 2<br>Town/City<br>Postcode/Zip<br><br><div class="ln"><ui-icon name="phone" size="11x11" style="margin-right:14px"></ui-icon>xxxx xxxx xxxxxx</div><div class="ln"><ui-icon name="mail" size="15x12" style="margin-right:13px"></ui-icon><a>contact@domain.com</a></div></div>
<div>Stay Up to Date With What's Happening<div class="soc"><social-button icon="twitter" style="background:#00a4f5"></social-button><social-button icon="linkedin" style="background:#116fae"></social-button><social-button icon="facebook" style="background:#49489b"></social-button><social-button icon="flickr" style="background:#ff0084"></social-button><social-button icon="rss" style="background:#f77d16"></social-button></div>Subscribe To Our Newsletter:<div class="nl"><input placeholder="Enter Email Here…"><span><ui-icon name="signin" size="15x13"></ui-icon></span></div></div>`);

def('color-strip',`:host{display:grid;grid-template-columns:43px 175px 63px 295px 60px 1fr 36px;height:8px;background:#212121}.t{background:#444;border-radius:8px 8px 0 0}`,
'<i style="background:#3f8a5c"></i><i></i><i style="background:#a86c0b"></i><i></i><i style="background:#b92d3b"></i><i></i><i class="t"></i>');

def('scroll-bar',':host{display:flex;flex-direction:column;justify-content:space-between;align-items:center;width:15px;background:#f1f1f1}.u{border:4px solid transparent;border-bottom-color:#505050;border-top:0;margin-top:6px}.th{width:11px;height:132px;background:#c1c1c1}','<i class="u"></i><i class="th"></i>');

def('web-page',`:host{display:grid;grid-template-columns:1fr 15px;height:708px;background:#0d1840}
 main{display:flex;flex-direction:column;height:708px}content-card{width:978px;margin-left:270px}
 .one{height:480px;border-radius:0 0 8px 8px;padding-top:0}.two{height:180px;margin-top:20px}color-strip{margin-top:20px}`,
`<main><content-card class="one"><document-table></document-table><review-form></review-form></content-card><content-card class="two"><page-footer></page-footer></content-card><color-strip></color-strip></main><scroll-bar></scroll-bar>`);

def('download-shelf',`:host{display:flex;align-items:center;height:61px;background:#353535;border-top:1px solid #262626;color:#fff;padding:0 13px 0 21px;font-size:16px}
 .sep{width:1px;height:48px;background:#5f5f5f;margin-left:18px}
 .all{margin-left:auto;width:89px;height:32px;border:1px solid #dadada;border-radius:4px;background:#434343;display:flex;align-items:center;justify-content:center;font-size:14px;font-weight:600;margin-right:13px}`,
`<ui-icon name="file" size="14x16" style="margin-right:15px"></ui-icon><fit-text w="139">605e704bec454_...</fit-text><ui-icon name="caret" size="10x6" style="margin-left:19px"></ui-icon><span class="sep"></span><span class="all"><fit-text w="57">Show all</fit-text></span><ui-icon name="x" size="10" style="color:#c4c4c4"></ui-icon>`);

def('browser-window',':host{display:flex;flex-direction:column;min-width:0}',
'<tab-strip></tab-strip><tool-bar></tool-bar><bookmarks-bar></bookmarks-bar><web-page></web-page><download-shelf></download-shelf>');

def('desk-top',':host{display:grid;grid-template:27px 873px/67px 1533px;width:1600px;height:900px;overflow:hidden}top-bar{grid-column:1/3}',
'<top-bar></top-bar><side-dock></side-dock><browser-window></browser-window>');
</script>
</body>
</html>
